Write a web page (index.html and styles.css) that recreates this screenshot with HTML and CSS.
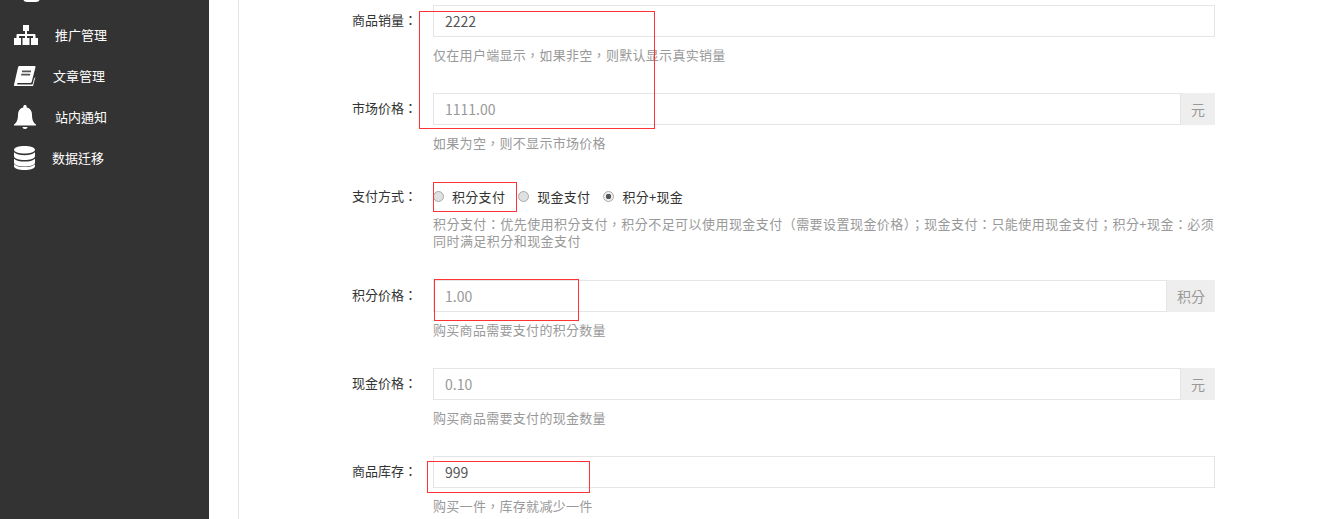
FILE: index.html
```html
<!DOCTYPE html>
<html lang="zh-TW">
<head>
<meta charset="utf-8">
<title>商品编辑</title>
<link rel="stylesheet" href="styles.css">
</head>
<body>
<div class="app">
  <aside class="sidebar">
    <ul class="nav">
      <li class="nav-item"><svg class="ico ico-edit" viewBox="0 0 24 24"><path d="M4 2v14a4 4 0 0 0 4 4h9a4 4 0 0 0 4-4v-4l-3 3v1a1 1 0 0 1-1 1H8a1 1 0 0 1-1-1V2zM10 13l1 6 5-1 8-11-5-4z" fill="#fff"/></svg></li>
      <li class="nav-item"><svg class="ico ico-map" viewBox="0 0 24 20"><path d="M9 0h6v6h-2v3h7.500a1 1 0 0 1 1 1v3H24v7h-7v-7h2V11h-6v2h2.500v7h-7v-7H11v-2H5v2h2v7H0v-7h2.500v-3a1 1 0 0 1 1-1H11V6H9z" fill="#fff"/></svg><span>推广管理</span></li>
      <li class="nav-item"><svg class="ico ico-book" viewBox="0 0 22 20"><path d="M5.500 0H21l.6.8-3.800 14.700c-.3 1-.9 1.500-2 1.500H4c-.9 0-1.300.8-.7 1.300.3.200.7.300 1.200.300h14l1.600-6 1.300-1.500-3 11.400H4c-2.300 0-4-1.500-4-3.300 0-.6.100-1.200.3-1.800L4 1.500C4.300.5 4.700 0 5.500 0z" fill="#fff"/><path d="M8 4.500h9v1.700H8zM7.200 7.700h9v1.700h-9z" fill="#555"/></svg><span>文章管理</span></li>
      <li class="nav-item"><svg class="ico ico-bell" viewBox="0 0 22 24"><path d="M11 0c1 0 1.700.7 1.700 1.700v.7c3.400.7 5.300 3.300 5.300 7 0 5 1 7.600 4 10.100v1H0v-1c3-2.500 4-5.100 4-10.100 0-3.700 1.900-6.300 5.300-7v-.7C9.300.7 10 0 11 0zM8.500 22h5c0 1.200-1.100 2-2.500 2s-2.500-.8-2.500-2z" fill="#fff"/></svg><span>站内通知</span></li>
      <li class="nav-item"><svg class="ico ico-db" viewBox="0 0 21 24"><path d="M10.500 0C16 0 21 1.500 21 3.800S16 7.600 10.500 7.600 0 6.100 0 3.800 5 0 10.500 0zM0 6.300c2 2 6 2.900 10.500 2.900S19 8.300 21 6.300v4c0 2.300-5 3.700-10.500 3.700S0 12.600 0 10.300zM0 12.800c2 2 6 2.800 10.500 2.800s8.500-.8 10.500-2.800v4c0 2.300-5 3.700-10.500 3.700S0 19.100 0 16.800zM0 18.300c2 2 6 2.800 10.500 2.800s8.500-.8 10.500-2.800v2c0 2.300-5 3.700-10.500 3.700S0 22.600 0 20.300z" fill="#fff"/></svg><span>数据迁移</span></li>
    </ul>
  </aside>
  <main class="main">
    <div class="panel">
      <form class="form">
        <div class="row">
          <label class="label">商品销量：</label>
          <div class="field">
            <div class="control"><input class="input" type="text" value="2222"></div>
            <p class="help">仅在用户端显示，如果非空，则默认显示真实销量</p>
          </div>
        </div>
        <div class="row">
          <label class="label">市场价格：</label>
          <div class="field">
            <div class="control"><input class="input input-muted" type="text" value="1111.00"><span class="addon">元</span></div>
            <p class="help">如果为空，则不显示市场价格</p>
          </div>
        </div>
        <div class="row row-radio">
          <label class="label">支付方式：</label>
          <div class="field">
            <div class="radios">
              <span class="radio"><i class="dot"></i>积分支付</span>
              <span class="radio"><i class="dot"></i>现金支付</span>
              <span class="radio"><i class="dot dot-on"></i>积分+现金</span>
            </div>
            <p class="help help-tight">积分支付：优先使用积分支付，积分不足可以使用现金支付（需要设置现金价格）；现金支付：只能使用现金支付；积分+现金：必须同时满足积分和现金支付</p>
          </div>
        </div>
        <div class="row">
          <label class="label">积分价格：</label>
          <div class="field">
            <div class="control"><input class="input input-muted" type="text" value="1.00"><span class="addon">积分</span></div>
            <p class="help">购买商品需要支付的积分数量</p>
          </div>
        </div>
        <div class="row">
          <label class="label">现金价格：</label>
          <div class="field">
            <div class="control"><input class="input input-muted" type="text" value="0.10"><span class="addon">元</span></div>
            <p class="help">购买商品需要支付的现金数量</p>
          </div>
        </div>
        <div class="row">
          <label class="label">商品库存：</label>
          <div class="field">
            <div class="control"><input class="input" type="text" value="999"></div>
            <p class="help">购买一件，库存就减少一件</p>
          </div>
        </div>
      </form>
    </div>
  </main>
  <div class="mark mark-a"></div>
  <div class="mark mark-b"></div>
  <div class="mark mark-c"></div>
  <div class="mark mark-d"></div>
</div>
</body>
</html>
```
FILE: styles.css
```css
* { box-sizing: border-box; }
html, body { margin: 0; padding: 0; height: 100%; overflow: hidden; background: #fff; }
body { font-family: "Noto Sans CJK TC", "Noto Sans CJK SC", "Liberation Sans", sans-serif; font-size: 13px; color: #333; }
.app { position: relative; display: flex; height: 519px; overflow: hidden; }
.sidebar { width: 209px; flex: none; background: #333; overflow: hidden; }
.nav { list-style: none; margin: -27px 0 0; padding: 0; }
.nav-item { display: flex; align-items: center; height: 41px; padding-left: 14px; color: #fff; font-size: 13px; line-height: 18px; }
.ico { flex: none; display: block; }
.ico-edit { width: 24px; height: 24px; margin-left: 5px; }
.ico-map { width: 24px; height: 20px; margin-right: 17px; }
.ico-book { width: 22px; height: 20px; margin-right: 17px; }
.ico-bell { width: 22px; height: 24px; margin-right: 19px; }
.ico-db { width: 21px; height: 24px; margin-right: 17px; }
.main { flex: 1; min-width: 0; padding-left: 29px; }
.panel { height: 100%; border-left: 1px solid #e5e5e5; padding: 5px 104px 0 113px; }
.row { display: flex; margin-bottom: 29px; }
.row-radio { margin-bottom: 31px; }
.label { width: 81px; flex: none; height: 30px; line-height: 30px; color: #333; white-space: nowrap; }
.field { flex: 1; min-width: 0; }
.control { display: flex; height: 32px; }
.input { flex: 1; min-width: 0; height: 32px; border: 1px solid #e5e5e5; padding: 0 11px; margin: 0; font: inherit; font-size: 14px; color: #555; background: #fff; outline: none; border-radius: 0; }
.input-muted { color: #999; }
.addon { flex: none; padding: 0 10px; height: 32px; line-height: 32px; font-size: 14px; background: #eee; color: #999; white-space: nowrap; }
.radios { display: flex; align-items: center; height: 30px; letter-spacing: .3px; }
.radio { display: flex; align-items: center; margin-right: 13px; color: #333; }
.dot { width: 11px; height: 11px; border-radius: 50%; margin-right: 8px; border: 1px solid #aaa; background: #e0e0e0; }
.dot-on { background: radial-gradient(circle, #555 0 2.500px, #eee 3px); }
.help { margin: 9px 0 0; color: #999; line-height: 18px; letter-spacing: .3px; }
.help-tight { margin: 4px 0 0; line-height: 17px; letter-spacing: .45px; }
.mark { position: absolute; border: 1px solid #f33; pointer-events: none; }
.mark-a { left: 419px; top: 11px; width: 236px; height: 118px; }
.mark-b { left: 433px; top: 182px; width: 84px; height: 30px; }
.mark-c { left: 434px; top: 279px; width: 145px; height: 42px; }
.mark-d { left: 427px; top: 461px; width: 163px; height: 32px; }
```
